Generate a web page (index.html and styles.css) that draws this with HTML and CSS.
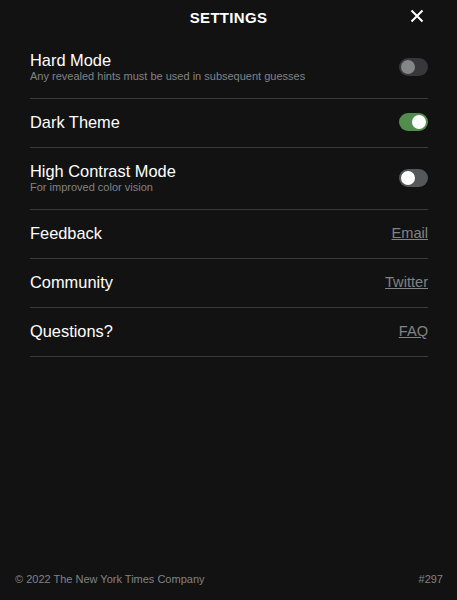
FILE: index.html
```html
<!DOCTYPE html>
<html lang="en">
<head>
<meta charset="utf-8">
<title>Settings</title>
<link rel="stylesheet" href="styles.css">
</head>
<body>
<div class="page">
  <header class="header">
    <h1 class="title">SETTINGS</h1>
    <button class="close" aria-label="Close">
      <svg viewBox="0 0 14 14" width="14" height="14"><path d="M1.5 1.5 L12.5 12.5 M12.5 1.5 L1.5 12.5" stroke="#fff" stroke-width="2" fill="none"/></svg>
    </button>
  </header>
  <section class="settings">
    <div class="setting">
      <div class="text">
        <div class="name">Hard Mode</div>
        <div class="desc">Any revealed hints must be used in subsequent guesses</div>
      </div>
      <div class="switch disabled"><span class="knob"></span></div>
    </div>
    <div class="setting">
      <div class="text">
        <div class="name">Dark Theme</div>
      </div>
      <div class="switch on"><span class="knob"></span></div>
    </div>
    <div class="setting">
      <div class="text">
        <div class="name">High Contrast Mode</div>
        <div class="desc">For improved color vision</div>
      </div>
      <div class="switch"><span class="knob"></span></div>
    </div>
    <div class="setting">
      <div class="text"><div class="name">Feedback</div></div>
      <a class="link" href="#">Email</a>
    </div>
    <div class="setting">
      <div class="text"><div class="name">Community</div></div>
      <a class="link" href="#">Twitter</a>
    </div>
    <div class="setting">
      <div class="text"><div class="name">Questions?</div></div>
      <a class="link" href="#">FAQ</a>
    </div>
  </section>
  <footer class="footer">
    <span>© 2022 The New York Times Company</span>
    <span>#297</span>
  </footer>
</div>
</body>
</html>
```
FILE: styles.css
```css
html, body {
  margin: 0;
  padding: 0;
  background: #121213;
}
body {
  font-family: "Liberation Sans", Arial, sans-serif;
  color: #ffffff;
}
.page {
  height: 600px;
  display: flex;
  flex-direction: column;
}
.header {
  position: relative;
  height: 37px;
  display: flex;
  justify-content: center;
  align-items: flex-start;
}
.title {
  margin: 9px 0 0;
  font-size: 15px;
  font-weight: 700;
  letter-spacing: 0.3px;
  line-height: 18px;
}
.close {
  position: absolute;
  right: 33px;
  top: 9px;
  width: 14px;
  height: 14px;
  padding: 0;
  border: 0;
  background: none;
  display: flex;
}
.settings {
  padding: 0 29px 0 30px;
  display: flex;
  flex-direction: column;
}
.setting {
  display: flex;
  justify-content: space-between;
  align-items: center;
  padding: 14px 0 16px;
  border-bottom: 1px solid #3a3a3c;
}
.name {
  font-size: 16.4px;
  line-height: 18px;
}
.desc {
  font-size: 11px;
  line-height: 13px;
  margin: 1px 0 -1px;
  color: #818384;
}
.switch {
  position: relative;
  width: 29px;
  height: 18px;
  border-radius: 9px;
  background: #565758;
  flex: none;
}
.knob {
  position: absolute;
  top: 2px;
  left: 2px;
  width: 14px;
  height: 14px;
  border-radius: 50%;
  background: #ffffff;
}
.switch.on {
  background: #538d4e;
}
.switch.on .knob {
  left: 13px;
}
.switch.disabled {
  background: #38383a;
}
.switch.disabled .knob {
  background: #858688;
}
.link {
  font-size: 14.6px;
  line-height: 18px;
  color: #818384;
  text-decoration: underline;
}
.footer {
  margin-top: auto;
  display: flex;
  justify-content: space-between;
  padding: 0 14px 14px 15px;
  font-size: 11px;
  line-height: 13px;
  color: #818384;
}
```
